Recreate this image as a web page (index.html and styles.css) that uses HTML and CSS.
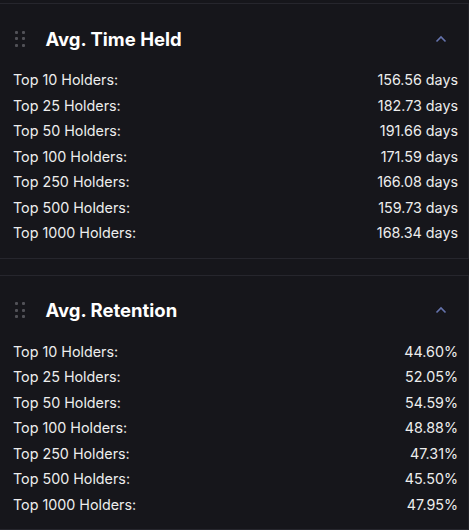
FILE: index.html
```html
<!DOCTYPE html>
<html lang="en">
<head>
  <meta charset="UTF-8">
  <meta name="viewport" content="width=device-width, initial-scale=1.0">
  <title>Holder Stats</title>
  <link rel="stylesheet" href="styles.css">
</head>
<body>

  <div class="stack">

    <!-- Avg. Time Held -->
    <section class="panel">
      <div class="panel-header">
        <span class="grip"><i></i><i></i><i></i><i></i><i></i><i></i></span>
        <h2 class="panel-title">Avg. Time Held</h2>
        <svg class="chevron" width="12" height="8" viewBox="0 0 12 8">
          <polyline points="1.5,6.5 6,2 10.5,6.5" fill="none" stroke="#6573ad" stroke-width="1.6"/>
        </svg>
      </div>
      <div class="rows">
        <div class="row"><span>Top 10 Holders:</span><span>156.56 days</span></div>
        <div class="row"><span>Top 25 Holders:</span><span>182.73 days</span></div>
        <div class="row"><span>Top 50 Holders:</span><span>191.66 days</span></div>
        <div class="row"><span>Top 100 Holders:</span><span>171.59 days</span></div>
        <div class="row"><span>Top 250 Holders:</span><span>166.08 days</span></div>
        <div class="row"><span>Top 500 Holders:</span><span>159.73 days</span></div>
        <div class="row"><span>Top 1000 Holders:</span><span>168.34 days</span></div>
      </div>
    </section>

    <!-- Avg. Retention -->
    <section class="panel">
      <div class="panel-header">
        <span class="grip"><i></i><i></i><i></i><i></i><i></i><i></i></span>
        <h2 class="panel-title">Avg. Retention</h2>
        <svg class="chevron" width="12" height="8" viewBox="0 0 12 8">
          <polyline points="1.5,6.5 6,2 10.5,6.5" fill="none" stroke="#6573ad" stroke-width="1.6"/>
        </svg>
      </div>
      <div class="rows">
        <div class="row"><span>Top 10 Holders:</span><span>44.60%</span></div>
        <div class="row"><span>Top 25 Holders:</span><span>52.05%</span></div>
        <div class="row"><span>Top 50 Holders:</span><span>54.59%</span></div>
        <div class="row"><span>Top 100 Holders:</span><span>48.88%</span></div>
        <div class="row"><span>Top 250 Holders:</span><span>47.31%</span></div>
        <div class="row"><span>Top 500 Holders:</span><span>45.50%</span></div>
        <div class="row"><span>Top 1000 Holders:</span><span>47.95%</span></div>
      </div>
    </section>

  </div>

</body>
</html>
```

FILE: styles.css
```css
body {
  margin: 0;
  background-color: #16161b;
  font-family: 'Inter', 'Roboto', sans-serif;
  color: #ededed;
}
.stack {
  padding-top: 3px;
  display: flex;
  flex-direction: column;
  gap: 16px;
}
.panel {
  border-top: 1px solid #26262d;
  border-bottom: 1px solid #26262d;
  border-right: 1px solid #202026;
}
.panel-header {
  display: flex;
  align-items: center;
  height: 63px;
  padding: 6px 21px 0 15px;
  box-sizing: border-box;
}
.grip {
  display: grid;
  grid-template-columns: 3px 3px;
  column-gap: 3.5px;
  row-gap: 3.5px;
  margin-right: 21px;
}
.grip i {
  display: block;
  width: 3px;
  height: 3px;
  border-radius: 1px;
  background-color: #515157;
}
.panel-title {
  flex: 1;
  margin: 0;
  font-size: 18.5px;
  font-weight: 700;
  color: #ffffff;
}
.chevron {
  display: block;
}
.rows {
  padding: 0 10px 12px 13px;
}
.row {
  display: flex;
  justify-content: space-between;
  font-size: 14.3px;
  line-height: 25.5px;
}
```
